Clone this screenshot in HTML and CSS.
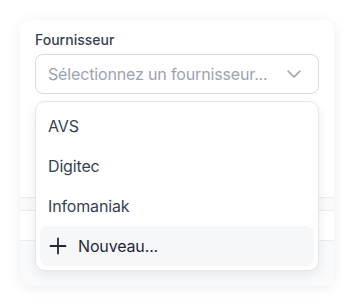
FILE: index.html
```html
<!DOCTYPE html>
<html lang="fr">
<head>
    <meta charset="UTF-8">
    <meta name="viewport" content="width=device-width, initial-scale=1.0">
    <title>Fournisseur</title>
    <link rel="stylesheet" href="styles.css">
</head>
<body>

<div class="card">
    <div class="field">
        <label class="field-label">Fournisseur</label>
        <div class="select-wrap">
            <div class="select">
                <span class="placeholder">Sélectionnez un fournisseur...</span>
                <svg class="chevron" width="16" height="16" viewBox="0 0 16 16" fill="none">
                    <path d="M2 5l6 6 6-6" stroke="#9ca3af" stroke-width="1.6" stroke-linecap="round" stroke-linejoin="round"/>
                </svg>
            </div>
            <ul class="menu">
                <li class="menu-item">AVS</li>
                <li class="menu-item">Digitec</li>
                <li class="menu-item">Infomaniak</li>
                <li class="menu-item menu-item-new">
                    <svg width="20" height="20" viewBox="0 0 20 20" fill="none">
                        <path d="M10 2.5v15M2.5 10h15" stroke="#1f2937" stroke-width="1.8" stroke-linecap="round"/>
                    </svg>
                    Nouveau...
                </li>
            </ul>
        </div>
    </div>
    <div class="spacer"></div>
    <div class="band"></div>
    <div class="row"></div>
    <div class="footer"></div>
</div>

</body>
</html>
```
FILE: styles.css
```css
body {
    font-family: Inter, "Noto Sans", sans-serif;
    background-color: #fff;
    margin: 0;
    padding: 20px;
}
.card {
    width: 314px;
    height: 266px;
    background: #fff;
    border-radius: 10px;
    box-shadow: 0 2px 14px rgba(0, 0, 0, 0.07);
    display: flex;
    flex-direction: column;
}
.field {
    padding: 10px 15px 0;
}
.field-label {
    display: block;
    font-size: 14px;
    line-height: 20px;
    font-weight: 500;
    color: #374151;
    margin-bottom: 4px;
}
.select-wrap {
    position: relative;
}
.select {
    height: 40px;
    box-sizing: border-box;
    border: 1px solid #d8dce2;
    border-radius: 8px;
    display: flex;
    align-items: center;
    justify-content: space-between;
    padding: 0 16px 0 12px;
}
.placeholder {
    font-size: 16px;
    letter-spacing: -0.15px;
    color: #9ca3af;
}
.chevron {
    display: block;
}
.menu {
    position: absolute;
    top: 47px;
    left: 0;
    right: 0;
    margin: 0;
    padding: 4px;
    list-style: none;
    background: #fff;
    border: 1px solid #e5e7eb;
    border-radius: 10px;
    box-shadow: 0 4px 12px rgba(0, 0, 0, 0.08);
    z-index: 2;
}
.menu-item {
    height: 40px;
    display: flex;
    align-items: center;
    gap: 10px;
    padding: 0 8px;
    font-size: 16px;
    letter-spacing: -0.15px;
    color: #374151;
    border-radius: 8px;
}
.menu-item-new {
    background: #f6f7f9;
    color: #1f2937;
}
.spacer {
    height: 103px;
}
.band {
    height: 12px;
    background: #f9fafb;
    border-top: 1px solid #eceef1;
    border-bottom: 1px solid #eceef1;
}
.row {
    height: 29px;
}
.footer {
    flex: 1;
    background: #f9fafb;
    border-top: 1px solid #eceef1;
    border-radius: 0 0 10px 10px;
}
```
